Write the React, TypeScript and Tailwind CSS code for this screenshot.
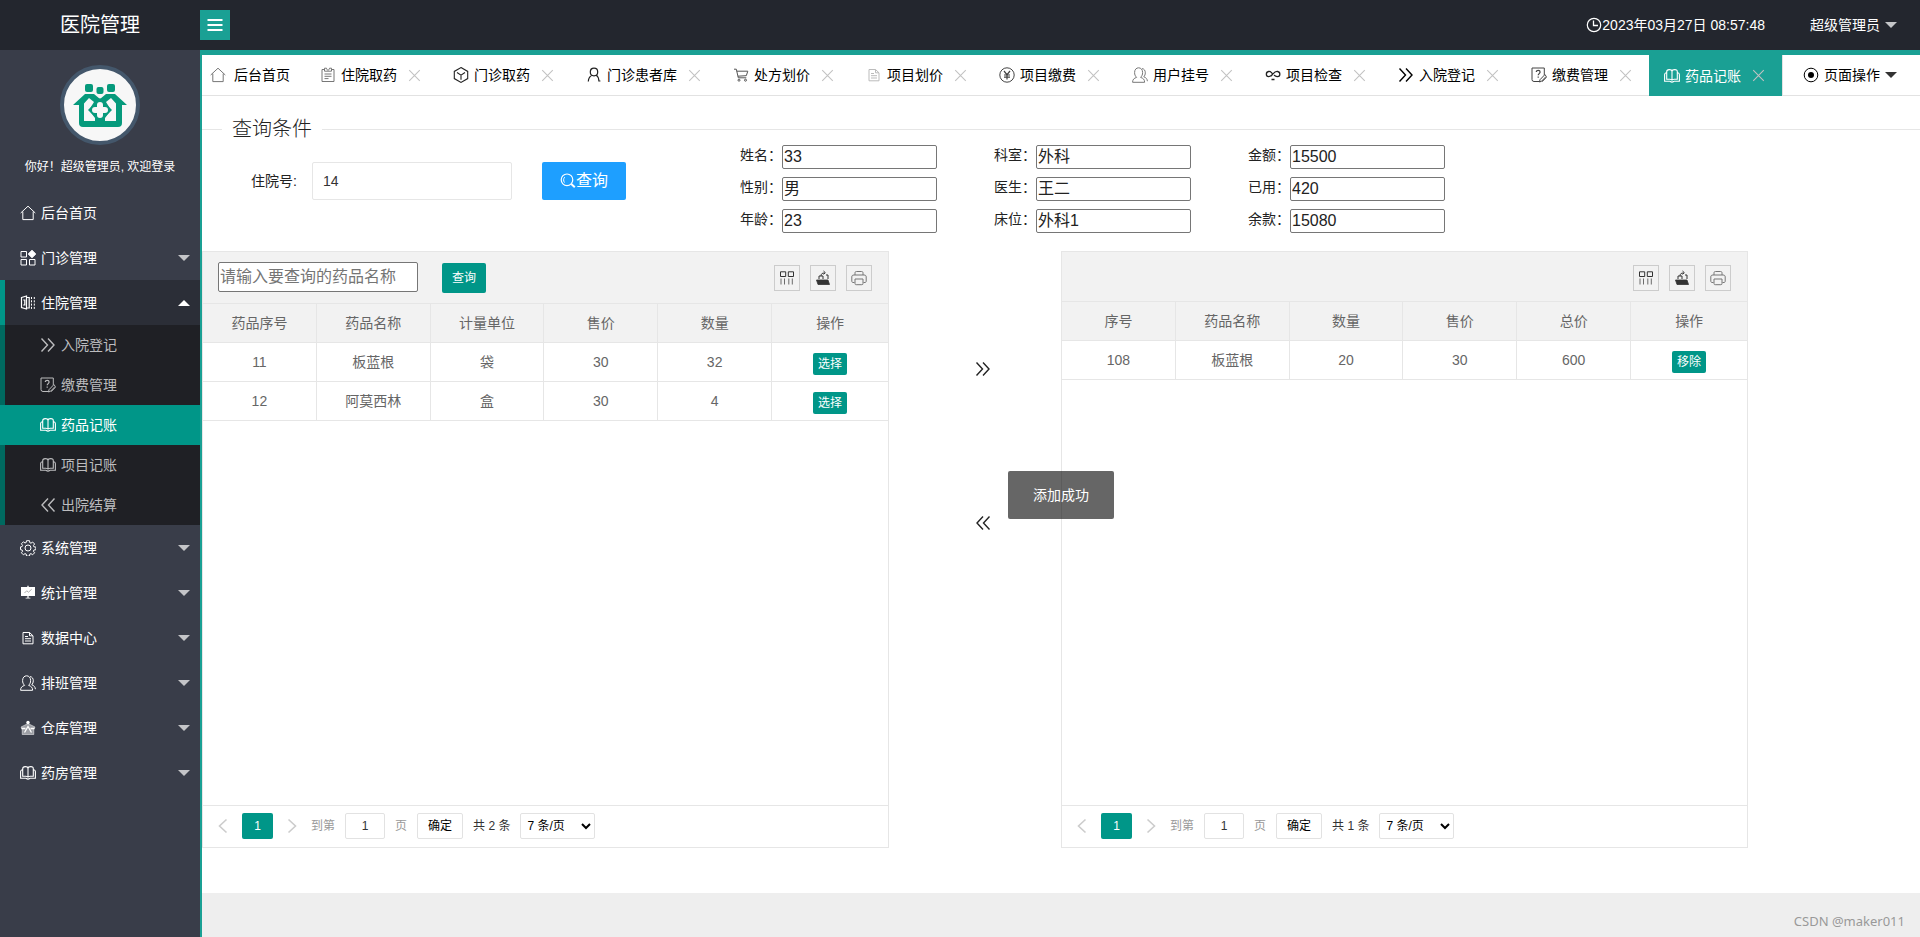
import { useState } from "react";
import type { ReactNode } from "react";
import { clsx } from "clsx";

const shapes = {
  home: <path d="M.7 8 8 1.2 15.3 8M2.8 6.6v8h10.4v-8" />,
  apps: (
    <>
      <path d="M1 1.5h5.5V7H1zM1 9.5h5.5V15H1zM9.5 9.5H15V15H9.5z" />
      <path d="M12 .3 15.8 4 12 7.7 8.2 4z" fill="currentColor" />
    </>
  ),
  ward: (
    <>
      <path d="M1.5 2.5 6.5 1v13l-5-1.5zM6.5 2.5h2.7v10.5H6.5M3.2 5h1.6v5H3.2" strokeWidth="1.2" />
      <path d="M11.5 2v12M14.3 2v12" strokeDasharray="2 1.3" />
    </>
  ),
  right: <path d="m1.5 1.5 6 6.5-6 6.5M8 1.5 14 8l-6 6.5" strokeWidth="1.4" />,
  left: <path d="m8 1.5-6 6.5 6 6.5M14.5 1.5l-6 6.5 6 6.5" strokeWidth="1.4" />,
  form: (
    <>
      <path d="M8.5 14.5H3A2 2 0 0 1 1 12.5V1h12.3v7" />
      <path d="M5.3 5c0-2.3 3.8-2.3 3.8 0 0 1.6-1.9 1.6-1.9 3.3M7.2 9.6v1.2" strokeWidth="1.2" />
      <path d="m9 12.7 4.8-5 1.6 1.5-4.8 5L8.5 15zM11 14.8l4.5-4.6" />
    </>
  ),
  book: (
    <path
      d="M8 3.5C8 2.1 6.600 1.600 5.200 1.600S2.700 2.300 2.700 3.700v7.600h3.100c1.300 0 2.200.5 2.200 1.300 0-.8.9-1.300 2.200-1.300h3.100V3.700c0-1.400-1.100-2.100-2.500-2.100S8 2.100 8 3.500zv9M2.700 4.500C1.200 4.800.6 5.500.6 6.600v6.600h5.200c.5 0 .8.9 2.200.9s1.700-.9 2.200-.9h5.200V6.600c0-1.100-.6-1.800-2.100-2.100"
      strokeWidth="1.1"
    />
  ),
  gear: (
    <>
      <circle cx="8" cy="8" r="3" />
      <path d="M6.500 .7h3l.3 2 1.200.5 1.600-1.200 2 2-1.200 1.600.5 1.200 2 .3v2.600l-2 .3-.5 1.200 1.200 1.600-2 2-1.600-1.200-1.200.5-.3 2h-3l-.3-2L5 13.600l-1.600 1.200-2-2 1.200-1.600-.5-1.200-1.600-.3V6.900l1.600-.3.5-1.200L1.400 3.800l2-2L5 3l1.200-.5z" />
    </>
  ),
  board: (
    <>
      <path d="M1 2h14v9H1zM7.3.8h1.4V2H7.3zM7.4 11h1.2v1.700h1.800v.8H5.600v-.8h1.800z" fill="currentColor" stroke="none" />
      <path d="m4.500 8 2.200-2.200 1.800 1.400 3.200-3" stroke="#999" strokeWidth=".8" />
    </>
  ),
  file: <path d="M3 2.500h6.500L13 5.800v8H3zM9.500 2.500v3.300H13M5 6.500h3M5 8.700h6M5 11h6" />,
  users: (
    <>
      <path d="M.6 15.300c0-3 1.400-4 4-4.900C3.200 8.900 2.600 7.700 2.600 5.500 2.600 2.600 4.300.8 6.600.8s4 1.800 4 4.700c0 2.200-.6 3.400-2 4.900 2.600.9 4 1.900 4 4.900z" />
      <path d="M10 1.600c2.300.2 3.300 2 3.300 4.200 0 1.600-.5 2.900-1.500 4 2.300.9 3.400 2 3.600 4.400" />
    </>
  ),
  store: (
    <>
      <path d="M1 7 8 3.500 15 7l-1.200 2.200v5.300H2.200V9.200z" fill="currentColor" fillOpacity=".5" strokeWidth=".5" />
      <circle cx="8" cy="2.500" r="1.700" fill="currentColor" stroke="none" />
      <path d="m4.500 12.500 3.500-6 3.500 6M1.500 8.500h4M10.500 8.500h4" strokeWidth="1.300" />
    </>
  ),
  note: (
    <>
      <path d="M4.500 2.500H2v12h12v-12h-2.500M4.500 1.200h2c0 2.500 3 2.500 3 0h2v3h-7z" />
      <path d="M4.500 7h7M4.500 9.300h7M4.500 11.600h4" />
    </>
  ),
  cube: <path d="m8 .6 6.700 3.800v7.200L8 15.400l-6.700-3.800V4.400zM4 5.500l4 2.600 4-2.600M8 8.100v4.600" strokeWidth="1.100" />,
  person: (
    <path d="M8 1.200c-2.300 0-3.700 1.600-3.700 3.800S5.700 8.800 8 8.800 11.700 7.200 11.700 5 10.300 1.200 8 1.200M5.700 8.300C3.500 9.600 2.500 11.500 2.300 14.500M10.300 8.300c2 1.300 2.500 3 2.600 5.700h1.500" strokeWidth="1.200" />
  ),
  cart: (
    <>
      <path d="M1 2.200h2.300l2 8.600h8M3.800 4.200h11l-1.500 4.500-8.400.5" />
      <circle cx="6" cy="13.200" r="1" />
      <circle cx="12.500" cy="13.200" r="1" />
    </>
  ),
  yen: (
    <>
      <circle cx="8" cy="8" r="7.200" />
      <path d="m5 4 3 3.700L11 4M8 7.700V12.500M5 8h6M5 10.200h6" strokeWidth="1.200" />
    </>
  ),
  link: (
    <path d="M8 7.500C6.500 5 5 4.300 3.600 4.500c-3 .5-3 5 0 5.200C6 9.800 7 7.800 8 6.800c1.200-1.400 2.700-2.600 4.600-2.300 3 .5 3 5 0 5.200-1.700 0-2.600-1-3.600-1.700M6.500 12.500h3" strokeWidth="1.300" />
  ),
  target: (
    <>
      <circle cx="8" cy="8" r="6.800" />
      <circle cx="8" cy="8" r="3" fill="currentColor" stroke="none" />
    </>
  ),
  clock: (
    <>
      <circle cx="8" cy="8" r="6.700" strokeWidth="1.200" />
      <path d="M7.500 3.500v5h4.500" strokeWidth="1.300" />
    </>
  ),
  search: (
    <>
      <circle cx="7" cy="6.800" r="5.800" strokeWidth="1.200" />
      <path d="M4.500 9.500C3.300 8 3.300 5.500 4.700 4.200" />
      <path d="m11.300 11 3.500 3.200" strokeWidth="2" />
    </>
  ),
  close: <path d="m1.500 1.500 13 13M14.500 1.500l-13 13" strokeWidth="1.300" />,
  columns: (
    <>
      <path d="M1.500 1.800h5.200v4.700H1.500zM9.300 1.800h5.200v4.700H9.300z" />
      <path d="M2 8.500v6M5.500 8.500v6M9.800 8.500v6M13.300 8.500v6" strokeOpacity=".7" />
    </>
  ),
  exportFile: (
    <>
      <path d="M1.500 10h11.500l1.500 4.500H3z" fill="currentColor" strokeWidth=".8" />
      <path d="M4 9V6h4v3M11 5h2v4M6 6c0-2 1-3 3.500-3M8.500 1l1.800 1.700L8.500 4.400" />
    </>
  ),
  print: (
    <path d="M4 5V3.200C4 1.800 4.500 1.500 5.500 1.500h5c1 0 1.500.3 1.500 1.700V5M3.500 12.500H2C1.200 12.500.8 12 .8 11V7C.8 5.600 1.500 5 3 5h10c1.500 0 2.200.6 2.200 2v4c0 1-.4 1.500-1.200 1.500h-1.500M4 9h8v4.500c0 .8-.3 1.200-1.200 1.200H5.200c-.9 0-1.200-.4-1.200-1.200z" />
  ),
  prev: <path d="m11.500 1.500-7 6.500 7 6.500" strokeWidth="1.600" />,
  next: <path d="m4.500 1.500 7 6.500-7 6.500" strokeWidth="1.600" />,
} satisfies Record<string, ReactNode>;

type IconName = keyof typeof shapes;

function Icon({ name, className = "size-4" }: { name: IconName; className?: string }) {
  return (
    <svg viewBox="0 0 16 16" fill="none" stroke="currentColor" aria-hidden="true" className={clsx("shrink-0", className)}>
      {shapes[name]}
    </svg>
  );
}

function Caret({ up = false, className }: { up?: boolean; className: string }) {
  return (
    <span
      className={clsx(
        "h-0 w-0 shrink-0 border-x-6 border-x-transparent",
        up ? "border-b-6" : "border-t-6",
        className
      )}
    />
  );
}

const menu: { label: string; icon: IconName; children?: { label: string; icon: IconName }[]; leaf?: boolean }[] = [
  { label: "后台首页", icon: "home", leaf: true },
  { label: "门诊管理", icon: "apps" },
  {
    label: "住院管理",
    icon: "ward",
    children: [
      { label: "入院登记", icon: "right" },
      { label: "缴费管理", icon: "form" },
      { label: "药品记账", icon: "book" },
      { label: "项目记账", icon: "book" },
      { label: "出院结算", icon: "left" },
    ],
  },
  { label: "系统管理", icon: "gear" },
  { label: "统计管理", icon: "board" },
  { label: "数据中心", icon: "file" },
  { label: "排班管理", icon: "users" },
  { label: "仓库管理", icon: "store" },
  { label: "药房管理", icon: "book" },
];

const tabs: { label: string; icon: IconName; color: string }[] = [
  { label: "住院取药", icon: "note", color: "text-[#777]" },
  { label: "门诊取药", icon: "cube", color: "text-[#222]" },
  { label: "门诊患者库", icon: "person", color: "text-[#222]" },
  { label: "处方划价", icon: "cart", color: "text-[#555]" },
  { label: "项目划价", icon: "file", color: "text-[#bbb]" },
  { label: "项目缴费", icon: "yen", color: "text-[#444]" },
  { label: "用户挂号", icon: "users", color: "text-[#777]" },
  { label: "项目检查", icon: "link", color: "text-[#222]" },
  { label: "入院登记", icon: "right", color: "text-black" },
  { label: "缴费管理", icon: "form", color: "text-[#444]" },
  { label: "药品记账", icon: "book", color: "text-white" },
];

const patient = [
  { id: "name", label: "姓名：", value: "33" },
  { id: "dept", label: "科室：", value: "外科" },
  { id: "amount", label: "金额：", value: "15500" },
  { id: "sex", label: "性别：", value: "男" },
  { id: "doctor", label: "医生：", value: "王二" },
  { id: "used", label: "已用：", value: "420" },
  { id: "age", label: "年龄：", value: "23" },
  { id: "bed", label: "床位：", value: "外科1" },
  { id: "balance", label: "余款：", value: "15080" },
];

function Avatar() {
  return (
    <div className="size-20 rounded-full border-4 border-[#44576b] bg-[#f7f7f7]">
      <svg viewBox="0 0 72 72" className="size-full" aria-hidden="true">
        <g fill="#069a7c">
          <rect x="21" y="15" width="8" height="8" rx="2" />
          <rect x="32.500" y="18" width="7" height="7" rx="2" />
          <rect x="43" y="15" width="8" height="8" rx="2" />
          <path d="M9 36 21 25h9l6 5 6-5h9l12 11h-5v18a4 4 0 0 1-4 4H19a4 4 0 0 1-4-4V36z" />
        </g>
        <path d="M20 34.500 25 29l5 4-5 8 6 8v3H20zM52 34.500 47 29l-5 4 5 8-6 8v3h11z" fill="#f7f7f7" />
        <path d="M36 29 48 41 36 53 24 41z" fill="#069a7c" />
        <path
          d="M33 38v-2a3 3 0 0 1 6 0v2h2a3 3 0 0 1 0 6h-2v2a3 3 0 0 1-6 0v-2h-2a3 3 0 0 1 0-6z"
          fill="#f7f7f7"
        />
      </svg>
    </div>
  );
}

function Sidebar() {
  return (
    <aside className="flex w-50 shrink-0 flex-col items-center bg-[#393d49] pt-[15px] text-white">
      <Avatar />
      <p className="mt-3 mb-[13px] text-xs leading-5">你好！超级管理员, 欢迎登录</p>
      <nav className="w-full text-sm">
        <ul>
          {menu.map((item) => (
            <li key={item.label}>
              <a
                href="#"
                className={clsx(
                  "flex h-[45px] items-center gap-[5px] pr-[10px]",
                  item.children ? "border-l-5 border-[#009688] bg-[#2b2e37] pl-[15px]" : "pl-5"
                )}
              >
                <Icon name={item.icon} />
                <span className="flex-1">{item.label}</span>
                {!item.leaf && (
                  <Caret up={!!item.children} className={item.children ? "border-b-white" : "border-t-[#c4c5c8]"} />
                )}
              </a>
              {item.children && (
                <ul>
                  {item.children.map((sub) => (
                    <li key={sub.label}>
                      <a
                        href="#"
                        className={clsx(
                          "flex h-10 items-center gap-[5px] border-l-5 pl-[35px]",
                          sub.label === "药品记账"
                            ? "border-[#009688] bg-[#009688] text-white"
                            : "border-[#00695f] bg-[#1f2025] text-[#bcbcbe]"
                        )}
                      >
                        <Icon name={sub.icon} />
                        {sub.label}
                      </a>
                    </li>
                  ))}
                </ul>
              )}
            </li>
          ))}
        </ul>
      </nav>
    </aside>
  );
}

function TabBar() {
  return (
    <div className="flex h-[41px] items-stretch border-b border-[#e2e2e2] text-sm text-black">
      <button className="flex items-center gap-2 pr-[15px] pl-2 whitespace-nowrap">
        <Icon name="home" className="size-4 text-[#777]" />
        后台首页
      </button>
      {tabs.map((tab, i) => {
        const active = i === tabs.length - 1;
        return (
          <div
            key={tab.label}
            className={clsx("flex items-center px-[15px] whitespace-nowrap", active && "-mb-px bg-[#1aa094] text-white")}
          >
            <button className="flex items-center gap-[5px]">
              <Icon name={tab.icon} className={clsx("size-4", tab.color)} />
              {tab.label}
            </button>
            <button aria-label={`关闭${tab.label}`} className="ml-2 flex w-[18px] justify-center text-[#c2c2c2]">
              <Icon name="close" className="size-[13px]" />
            </button>
          </div>
        );
      })}
      <button className="flex flex-1 items-center justify-end gap-[5px] border-l border-[#e2e2e2] pr-[23px] whitespace-nowrap">
        <Icon name="target" />
        页面操作
        <Caret className="border-t-[#333]" />
      </button>
    </div>
  );
}

function QueryForm() {
  return (
    <fieldset className="mt-[19px] border-t border-[#e6e6e6]">
      <legend className="ml-5 px-[10px] text-xl leading-7 font-light text-[#222]">查询条件</legend>
      <div className="flex h-27 items-start pt-[2px] pl-[49px]">
        <div className="flex items-center pt-[17px]">
          <label htmlFor="inpatient" className="w-[61px] text-sm text-[#222]">
            住院号:
          </label>
          <input
            id="inpatient"
            defaultValue="14"
            className="h-[38px] w-50 rounded-xs border border-[#e6e6e6] px-[10px] text-sm text-[#333]"
          />
          <button className="ml-[30px] flex h-[38px] w-21 items-center justify-center rounded-xs bg-[#1e9fff] text-base text-white">
            <Icon name="search" />
            查询
          </button>
        </div>
        <div className="ml-[114px] grid grid-cols-3 gap-x-[57px] gap-y-2">
          {patient.map((field) => (
            <div key={field.id} className="flex items-start">
              <label htmlFor={field.id} className="w-[42px] text-sm leading-5 text-[#222]">
                {field.label}
              </label>
              <input
                id={field.id}
                defaultValue={field.value}
                className="h-6 w-[155px] rounded-xs border border-[#767676] px-px text-base text-[#222]"
              />
            </div>
          ))}
        </div>
      </div>
    </fieldset>
  );
}

type PanelProps = {
  id: string;
  columns: string[];
  rows: string[][];
  action: string;
  toolbarClass: string;
  children?: ReactNode;
};

function TablePanel({ id, columns, rows, action, toolbarClass, children }: PanelProps) {
  const [pageSize, setPageSize] = useState("7");
  return (
    <section className="flex flex-col border border-[#e6e6e6] bg-white">
      <div className={clsx("flex items-start border-b border-[#e6e6e6] bg-[#f2f2f2] pt-[10px] pr-4 pl-[15px]", toolbarClass)}>
        {children}
        <div className="mt-[3px] ml-auto flex gap-[10px] text-[#333]">
          <button aria-label="筛选列" className="flex size-[26px] items-center justify-center border border-[#ccc]">
            <Icon name="columns" />
          </button>
          <button aria-label="导出" className="flex size-[26px] items-center justify-center border border-[#ccc]">
            <Icon name="exportFile" />
          </button>
          <button aria-label="打印" className="flex size-[26px] items-center justify-center border border-[#ccc] text-[#777]">
            <Icon name="print" />
          </button>
        </div>
      </div>
      <table className="w-full table-fixed border-separate border-spacing-0 text-center text-sm text-[#666]">
        <thead className="bg-[#f2f2f2]">
          <tr>
            {columns.map((col) => (
              <th key={col} className="h-[39px] w-1/6 border-r border-b border-[#e6e6e6] font-normal last:w-[17%] last:border-r-0">
                {col}
              </th>
            ))}
          </tr>
        </thead>
        <tbody>
          {rows.map((row) => (
            <tr key={row[0]}>
              {row.map((cell, i) => (
                <td key={i} className="h-[39px] border-r border-b border-[#e6e6e6]">
                  {cell}
                </td>
              ))}
              <td className="h-[39px] border-b border-[#e6e6e6] pt-[3px]">
                <button className="mx-auto block h-[22px] rounded-xs bg-[#009688] px-[5px] text-xs text-white">{action}</button>
              </td>
            </tr>
          ))}
        </tbody>
      </table>
      <div className="mt-auto flex h-[42px] items-start border-t border-[#e6e6e6] pt-[7px] pl-[15px] text-xs leading-[26px] text-[#333]">
        <button aria-label="上一页" className="flex h-[26px] w-[9px] items-center justify-center text-[#ccc]">
          <Icon name="prev" />
        </button>
        <button className="ml-[15px] h-[26px] w-[31px] rounded-xs bg-[#009688] text-white">1</button>
        <button aria-label="下一页" className="ml-[14px] flex h-[26px] w-[9px] items-center justify-center text-[#ccc]">
          <Icon name="next" />
        </button>
        <label htmlFor={`${id}-page`} className="ml-[15px] text-[#999]">
          到第
        </label>
        <input
          id={`${id}-page`}
          defaultValue="1"
          className="ml-[10px] h-[26px] w-10 rounded-xs border border-[#e2e2e2] text-center"
        />
        <span className="ml-[10px] text-[#999]">页</span>
        <button className="ml-[10px] h-[26px] w-[46px] rounded-xs border border-[#e2e2e2] leading-6 text-black">确定</button>
        <span className="ml-[10px]">共 {rows.length} 条</span>
        <select
          aria-label="每页条数"
          value={pageSize}
          onChange={(e) => setPageSize(e.target.value)}
          className="ml-[10px] h-[26px] w-[75px] rounded-xs border border-[#e2e2e2] pl-[2px] text-black"
        >
          <option value="7">7 条/页</option>
          <option value="14">14 条/页</option>
          <option value="21">21 条/页</option>
        </select>
      </div>
    </section>
  );
}

export default function App() {
  return (
    <div className="flex min-h-screen w-full flex-col bg-white font-['Liberation_Sans','Noto_Sans_CJK_SC',sans-serif]">
      <header className="flex h-[50px] items-center bg-[#23262e] text-sm text-white">
        <h1 className="w-50 text-center text-xl">医院管理</h1>
        <button aria-label="收起菜单" className="flex size-[30px] items-center justify-center bg-[#1aa094]">
          <svg viewBox="0 0 16 16" className="size-4" aria-hidden="true">
            <path d="M.5 3h15M.5 8h15M.5 13h15" stroke="#fff" strokeWidth="2" />
          </svg>
        </button>
        <time className="ml-auto flex items-center">
          <Icon name="clock" />
          2023年03月27日 08:57:48
        </time>
        <button className="mr-[23px] ml-[45px] flex items-center gap-[5px]">
          超级管理员
          <Caret className="border-t-[#c4c5c8]" />
        </button>
      </header>

      <div className="flex flex-1">
        <Sidebar />
        <main className="flex min-w-0 flex-1 flex-col border-t-5 border-l-2 border-[#1aa094]">
          <TabBar />
          <div className="relative flex flex-1 flex-col">
            <QueryForm />
            <div className="mb-[45px] grid flex-1 grid-cols-[4fr_1fr_4fr_1fr]">
              <TablePanel
                id="stock"
                columns={["药品序号", "药品名称", "计量单位", "售价", "数量", "操作"]}
                rows={[
                  ["11", "板蓝根", "袋", "30", "32"],
                  ["12", "阿莫西林", "盒", "30", "4"],
                ]}
                action="选择"
                toolbarClass="h-[52px]"
              >
                <input
                  aria-label="药品名称"
                  placeholder="请输入要查询的药品名称"
                  className="h-[30px] w-50 rounded-xs border border-[#767676] bg-white px-px text-base placeholder:text-[#757575]"
                />
                <button className="mt-px ml-6 h-[30px] w-11 rounded-xs bg-[#009688] text-xs text-white">查询</button>
              </TablePanel>
              <div className="flex flex-col items-center gap-[138px] pt-[110px] pl-[15px] text-[#222]">
                <button aria-label="添加">
                  <Icon name="right" />
                </button>
                <button aria-label="移除">
                  <Icon name="left" />
                </button>
              </div>
              <TablePanel
                id="bill"
                columns={["序号", "药品名称", "数量", "售价", "总价", "操作"]}
                rows={[["108", "板蓝根", "20", "30", "600"]]}
                action="移除"
                toolbarClass="h-[50px]"
              />
            </div>
            <div
              role="status"
              className="absolute top-1/2 left-1/2 -translate-x-1/2 -translate-y-1/2 rounded-xs bg-black/60 px-[25px] py-3 text-sm leading-6 whitespace-nowrap text-white"
            >
              添加成功
            </div>
          </div>
          <footer className="flex h-11 items-center justify-end bg-[#eee] pt-[14px] pr-[15px] font-['Noto_Sans',sans-serif] text-[13px] text-[#999]">
            CSDN @maker011
          </footer>
        </main>
      </div>
    </div>
  );
}
